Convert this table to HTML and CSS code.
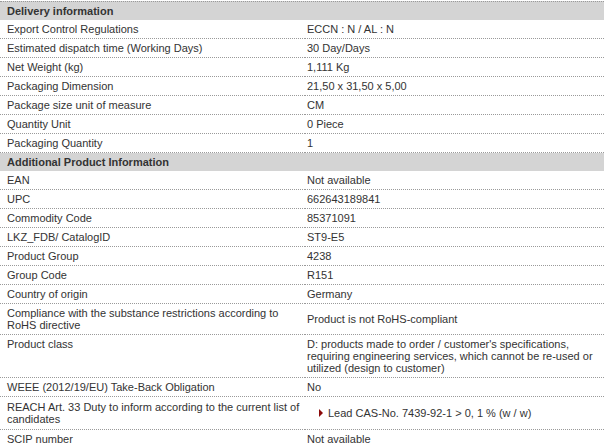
FILE: index.html
```html
<!DOCTYPE html>
<html lang="en">
<head>
<meta charset="utf-8">
<title>Product data</title>
<link rel="stylesheet" href="styles.css">
</head>
<body>
<div class="wrap">
<table class="data">
  <colgroup><col class="c1"><col class="c2"></colgroup>
  <tr class="head first"><th colspan="2">Delivery information</th></tr>
  <tr><td>Export Control Regulations</td><td>ECCN : N / AL : N</td></tr>
  <tr><td>Estimated dispatch time (Working Days)</td><td>30 Day/Days</td></tr>
  <tr><td>Net Weight (kg)</td><td>1,111 Kg</td></tr>
  <tr><td>Packaging Dimension</td><td>21,50 x 31,50 x 5,00</td></tr>
  <tr><td>Package size unit of measure</td><td>CM</td></tr>
  <tr><td>Quantity Unit</td><td>0 Piece</td></tr>
  <tr><td>Packaging Quantity</td><td>1</td></tr>
  <tr class="head"><th colspan="2">Additional Product Information</th></tr>
  <tr><td>EAN</td><td>Not available</td></tr>
  <tr><td>UPC</td><td>662643189841</td></tr>
  <tr><td>Commodity Code</td><td>85371091</td></tr>
  <tr><td>LKZ_FDB/ CatalogID</td><td>ST9-E5</td></tr>
  <tr><td>Product Group</td><td>4238</td></tr>
  <tr><td>Group Code</td><td>R151</td></tr>
  <tr><td>Country of origin</td><td>Germany</td></tr>
  <tr><td>Compliance with the substance restrictions according to RoHS directive</td><td>Product is not RoHS-compliant</td></tr>
  <tr><td class="top">Product class</td><td>D: products made to order / customer's specifications, requiring engineering services, which cannot be re-used or utilized (design to customer)</td></tr>
  <tr><td>WEEE (2012/19/EU) Take-Back Obligation</td><td>No</td></tr>
  <tr><td>REACH Art. 33 Duty to inform according to the current list of candidates</td><td><ul class="reach"><li>Lead CAS-No. 7439-92-1 &gt; 0, 1 % (w / w)</li></ul></td></tr>
  <tr><td>SCIP number</td><td>Not available</td></tr>
</table>
</div>
</body>
</html>
```
FILE: styles.css
```css
html, body {
  margin: 0;
  padding: 0;
  background: #ffffff;
}
.wrap {
  padding-top: 1px;
}
.data {
  width: 604px;
  border-collapse: separate;
  border-spacing: 0;
  font-family: "Liberation Sans", Arial, sans-serif;
  font-size: 11px;
  line-height: 12px;
  color: #333333;
  table-layout: fixed;
}
.c1 { width: 305px; }
.c2 { width: 299px; }
.data td {
  padding: 3px 0 3px 7px;
  border-bottom: 1px dotted #9a9a9a;
  vertical-align: middle;
  text-align: left;
}
.data td + td {
  padding-left: 2px;
  padding-right: 4px;
}
.data td.top {
  vertical-align: top;
}
.data th {
  background: #d4d4d4;
  font-weight: bold;
  text-align: left;
  padding: 3px 7px;
  color: #333333;
}
.head.first th {
  border-top: 1px dotted #9a9a9a;
}
.reach {
  list-style: none;
  margin: 7px 0;
  padding: 0 0 0 21px;
}
.reach li {
  position: relative;
}
.reach li::before {
  content: "";
  position: absolute;
  left: -9px;
  top: 2px;
  width: 0;
  height: 0;
  border-top: 4px solid transparent;
  border-bottom: 4px solid transparent;
  border-left: 4px solid #8b0a0a;
}
```
